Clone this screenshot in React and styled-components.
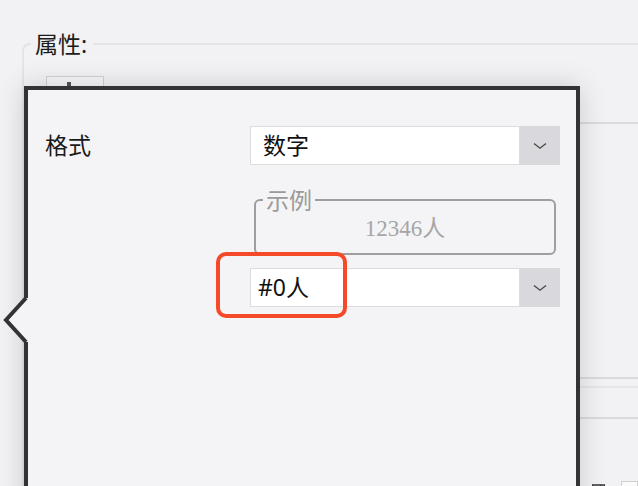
import styled, { createGlobalStyle } from 'styled-components';

const GlobalStyle = createGlobalStyle`
  html, body {
    margin: 0;
    background: #f2f2f4;
    overflow: hidden;
  }
  body {
    font-family: 'Noto Sans', 'Noto Sans CJK SC', sans-serif;
    color: #1a1a1a;
  }
`;

function Chevron() {
  return (
    <svg width='16' height='8' viewBox='0 0 16 8'>
      <path d='M2 1.5 L8 6.2 L14 1.5' fill='none' stroke='#4a4a4a' strokeWidth='1.4' />
    </svg>
  );
}

function Select({ value, pad }) {
  return (
    <SelectWrap>
      <SelectValue pad={pad}>{value}</SelectValue>
      <SelectButton>
        <Chevron />
      </SelectButton>
    </SelectWrap>
  );
}

export default function App() {
  return (
    <Page>
      <GlobalStyle />
      <PropsFieldset>
        <PropsLegend>属性:</PropsLegend>
        <PropsBody>
          <TabBox>
            <TabMark />
          </TabBox>
          <Divider top='16px' />
          <Divider top='253px' />
          <Divider top='7px' faint />
          <Divider top='29px' />
          <IconRow>
            <svg width='20' height='20' viewBox='0 0 20 20'>
              <path d='M1 19 V1 H19 V19 M13 1 V19' fill='none' stroke='#333' strokeWidth='2' />
            </svg>
            <LightBox />
          </IconRow>
        </PropsBody>
      </PropsFieldset>

      <Popup>
        <Arrow width='30' height='50' viewBox='0 0 30 50'>
          <polygon points='30,3 26,3 6,25 26,47 30,47' fill='#f4f4f6' />
          <polyline points='26,3 6,25 26,47' fill='none' stroke='#333' strokeWidth='4' />
        </Arrow>
        <FormGrid>
          <Label>格式</Label>
          <Select value='数字' pad='12px' />
          <Example>
            <ExampleLegend>示例</ExampleLegend>
            <ExampleValue>12346人</ExampleValue>
          </Example>
          <Highlighted>
            <Select value='#0人' pad='7px' />
            <RedBox />
          </Highlighted>
        </FormGrid>
      </Popup>
    </Page>
  );
}

const Page = styled.div`
  position: relative;
  width: 638px;
  height: 486px;
  padding-top: 32px;
  box-sizing: border-box;
  overflow: hidden;
`;

const PropsFieldset = styled.fieldset`
  margin: 0 0 0 22px;
  padding: 0;
  min-width: 0;
  border: 2px solid #e4e4e7;
  border-right: none;
  border-bottom: none;
  border-radius: 8px 0 0 0;
`;

const PropsLegend = styled.legend`
  margin-left: 7px;
  padding: 0 6px 0 4px;
  font-size: 23px;
  line-height: 24px;
  color: #1c1c1c;
`;

const PropsBody = styled.div`
  display: flex;
  flex-direction: column;
  padding: 20px 0 0 22px;
`;

const TabBox = styled.div`
  width: 58px;
  height: 30px;
  box-sizing: border-box;
  border: 1px solid #d2d2d5;
  background: #f6f6f8;
  padding: 5px 0 0 20px;
`;

const TabMark = styled.div`
  width: 4px;
  height: 10px;
  background: #555;
`;

const Divider = styled.div`
  margin-top: ${(p) => p.top};
  margin-left: -22px;
  height: 2px;
  background: ${(p) => (p.faint ? '#e6e6e9' : '#dadadd')};
`;

const IconRow = styled.div`
  display: flex;
  gap: 16px;
  margin: 62px 0 0 0;
  padding-left: 546px;
`;

const LightBox = styled.div`
  width: 24px;
  height: 20px;
  box-sizing: border-box;
  border: 1px solid #cfcfd2;
  background: #fafafa;
`;

const Popup = styled.div`
  position: absolute;
  left: 24px;
  top: 86px;
  width: 556px;
  height: 430px;
  box-sizing: border-box;
  border: 4px solid #333;
  background: #f4f4f6;
  box-shadow: 0 0 26px rgba(0, 0, 0, 0.16);
  padding: 36px 16px 0 17px;
`;

const Arrow = styled.svg`
  position: absolute;
  left: -28px;
  top: 205px;
`;

const FormGrid = styled.div`
  display: grid;
  grid-template-columns: 205px 310px;
  align-items: center;
`;

const Label = styled.div`
  font-size: 23px;
  line-height: 39px;
  color: #1a1a1a;
`;

const SelectWrap = styled.div`
  display: flex;
  width: 310px;
  height: 39px;
`;

const SelectValue = styled.div`
  flex: 1;
  box-sizing: border-box;
  background: #fff;
  border: 1px solid #dcdcdf;
  padding-left: ${(p) => p.pad};
  font-size: 23px;
  line-height: 37px;
  color: #111;
`;

const SelectButton = styled.div`
  width: 40px;
  display: flex;
  align-items: center;
  justify-content: center;
  background: #d9d9dd;
`;

const Example = styled.fieldset`
  grid-column: 2;
  margin: 22px 4px 0 4px;
  padding: 0;
  min-width: 0;
  border: 2px solid #9e9e9e;
  border-radius: 6px;
`;

const ExampleLegend = styled.legend`
  margin-left: 7px;
  padding: 0 3px;
  font-size: 23px;
  line-height: 26px;
  color: #9a9a9a;
`;

const ExampleValue = styled.div`
  text-align: center;
  font-family: 'Liberation Serif', 'Noto Sans CJK SC', serif;
  font-size: 23px;
  line-height: 32px;
  padding-bottom: 8px;
  color: #a6a6a6;
`;

const Highlighted = styled.div`
  grid-column: 2;
  position: relative;
  margin-top: 13px;
`;

const RedBox = styled.div`
  position: absolute;
  left: -34px;
  top: -16px;
  width: 131px;
  height: 66px;
  box-sizing: border-box;
  border: 4px solid #f44a2a;
  border-radius: 10px;
`;
